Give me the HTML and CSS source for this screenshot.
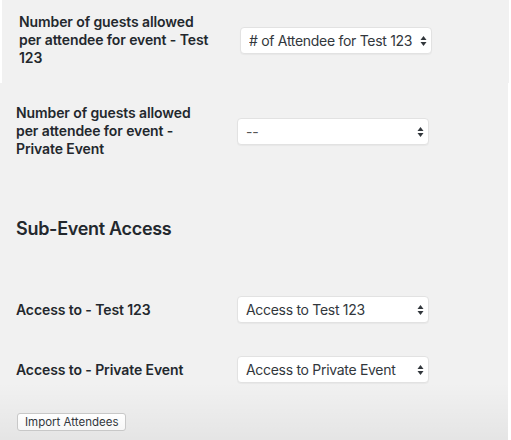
FILE: index.html
```html
<!DOCTYPE html>
<html lang="en">
<head>
    <meta charset="UTF-8">
    <meta name="viewport" content="width=device-width, initial-scale=1.0">
    <title>Event Attendees</title>
    <link rel="stylesheet" href="styles.css">
</head>
<body>
    <div class="top-panel">
        <div class="field-row">
            <label class="field-label" for="guests-test">Number of guests allowed per attendee for event - Test 123</label>
            <div class="select-wrap">
                <select id="guests-test" class="field-select">
                    <option># of Attendee for Test 123</option>
                </select>
                <svg class="select-arrows" width="7" height="12" viewBox="0 0 7 12"><path d="M3.5 1 L6.5 5 H0.5 Z M3.5 11 L6.5 7 H0.5 Z" fill="#32373c"/></svg>
            </div>
        </div>
    </div>

    <div class="main">
        <div class="field-row guests-row">
            <label class="field-label" for="guests-private">Number of guests allowed per attendee for event - Private Event</label>
            <div class="select-wrap">
                <select id="guests-private" class="field-select muted">
                    <option>--</option>
                </select>
                <svg class="select-arrows" width="7" height="12" viewBox="0 0 7 12"><path d="M3.5 1 L6.5 5 H0.5 Z M3.5 11 L6.5 7 H0.5 Z" fill="#32373c"/></svg>
            </div>
        </div>

        <h2 class="section-title">Sub-Event Access</h2>

        <div class="field-row access-row">
            <label class="field-label" for="access-test">Access to - Test 123</label>
            <div class="select-wrap">
                <select id="access-test" class="field-select">
                    <option>Access to Test 123</option>
                </select>
                <svg class="select-arrows" width="7" height="12" viewBox="0 0 7 12"><path d="M3.5 1 L6.5 5 H0.5 Z M3.5 11 L6.5 7 H0.5 Z" fill="#32373c"/></svg>
            </div>
        </div>

        <div class="field-row access-row second">
            <label class="field-label" for="access-private">Access to - Private Event</label>
            <div class="select-wrap">
                <select id="access-private" class="field-select">
                    <option>Access to Private Event</option>
                </select>
                <svg class="select-arrows" width="7" height="12" viewBox="0 0 7 12"><path d="M3.5 1 L6.5 5 H0.5 Z M3.5 11 L6.5 7 H0.5 Z" fill="#32373c"/></svg>
            </div>
        </div>

        <button class="import-btn">Import Attendees</button>
    </div>
</body>
</html>
```

FILE: styles.css
```css
body {
    margin: 0;
    background-color: #fff;
    font-family: Inter, "Liberation Sans", Arial, sans-serif;
    color: #23282d;
    height: 440px;
    overflow: hidden;
}
.top-panel {
    background-color: #f1f1f1;
    margin: 0 2px;
    height: 83px;
    box-sizing: border-box;
    padding: 13px 0 0 17px;
}
.main {
    background-color: #f1f1f1;
    background-image: linear-gradient(to bottom, rgba(0, 0, 0, 0) 300px, rgba(0, 0, 0, 0.05) 357px);
    margin-right: 3px;
    height: 357px;
    box-sizing: border-box;
    padding: 21px 0 0 16px;
}
.field-row {
    display: flex;
    align-items: center;
}
.field-label {
    width: 195px;
    margin-right: 26px;
    font-size: 14px;
    font-weight: 600;
    line-height: 18px;
    letter-spacing: -0.1px;
}
.select-wrap {
    position: relative;
    width: 192px;
}
.field-select {
    -webkit-appearance: none;
    appearance: none;
    width: 100%;
    height: 27px;
    margin: 0;
    padding: 0 12px 0 8px;
    background-color: #fff;
    border: 1px solid #e2e2e2;
    border-radius: 4px;
    box-shadow: 0 1px 1px rgba(0, 0, 0, 0.04);
    font-family: Inter, "Liberation Sans", Arial, sans-serif;
    font-size: 14px;
    letter-spacing: -0.3px;
    color: #32373c;
}
.field-select.muted {
    color: #555;
}
.select-arrows {
    position: absolute;
    right: 5px;
    top: 8px;
    pointer-events: none;
}
.section-title {
    margin: 59px 0 0;
    font-size: 18px;
    font-weight: 600;
    line-height: 24px;
    letter-spacing: -0.3px;
}
.access-row {
    margin-top: 55px;
}
.access-row.second {
    margin-top: 33px;
}
.import-btn {
    display: block;
    margin: 30px 0 0 1px;
    height: 18px;
    padding: 0 7px;
    background: linear-gradient(#fff, #f7f7f7);
    border: 1px solid #c8c8c8;
    border-radius: 3px;
    font-family: Inter, "Liberation Sans", Arial, sans-serif;
    font-size: 11.5px;
    color: #32373c;
}
```
